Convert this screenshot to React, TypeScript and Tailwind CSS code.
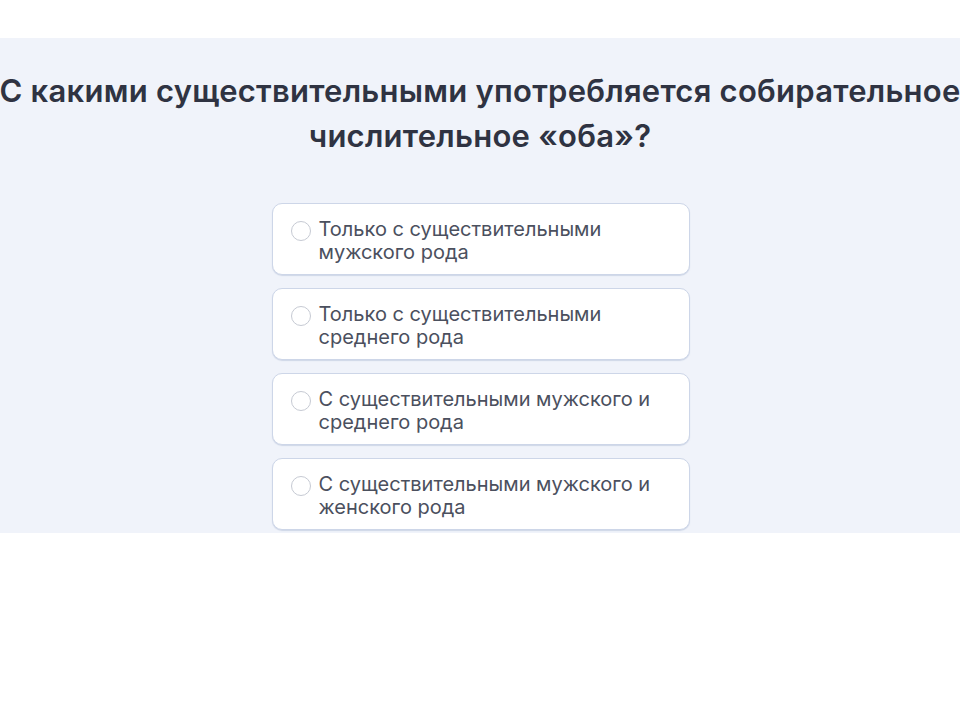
const options = [
  "Только с существительными мужского рода",
  "Только с существительными среднего рода",
  "С существительными мужского и среднего рода",
  "С существительными мужского и женского рода",
];

export default function App() {
  return (
    <div className="w-[960px] h-[720px] bg-white overflow-hidden font-['Inter',sans-serif]">
      <div className="h-[38px]" />
      <div className="bg-[#f0f3fa] flex flex-col items-center pt-[30px] pb-[3px]">
        {/* question */}
        <h1 className="w-max text-center text-[31px] leading-[45px] tracking-[0.25px] font-semibold text-[#2f3342]">
          С какими существительными употребляется собирательное
          <br />
          числительное «оба»?
        </h1>

        {/* answers */}
        <div className="mt-[45px] ml-[1px] w-[418px] flex flex-col gap-[13px]">
          {options.map((text) => (
            <label
              key={text}
              className="flex items-start gap-[8px] h-[72px] pl-[18px] pr-6 pt-[14px] bg-white border border-[#cdd6e8] rounded-[10px] shadow-[0_1px_1px_rgba(160,175,205,0.4)] cursor-pointer"
            >
              <span className="mt-[3px] w-[20px] h-[20px] shrink-0 rounded-full border border-[#c6cad3] bg-white" />
              <span className="text-[20px] leading-[23px] text-[#4b505e]">{text}</span>
            </label>
          ))}
        </div>
      </div>
    </div>
  );
}
